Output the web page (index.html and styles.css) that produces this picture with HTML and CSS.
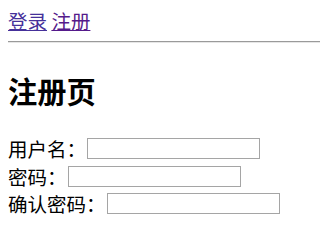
FILE: index.html
```html
<!DOCTYPE html>
<html lang="zh-CN">
<head>
<meta charset="utf-8">
<title>注册页</title>
<link rel="stylesheet" href="styles.css">
</head>
<body>
<nav class="nav"><a class="nav-link nav-link-login" href="#login">登录</a> <a class="nav-link" href="#register">注册</a></nav>
<hr class="rule">
<h2 class="title">注册页</h2>
<form class="form">
  <div class="row"><label class="label" for="u">用户名：</label><input class="field" id="u" type="text"></div>
  <div class="row"><label class="label" for="p">密码：</label><input class="field" id="p" type="password"></div>
  <div class="row"><label class="label" for="c">确认密码：</label><input class="field" id="c" type="password"></div>
</form>
</body>
</html>
```

FILE: styles.css
```css
html, body {
  background: #fff;
}
body {
  margin: 8px 0 0 8px;
  font-family: "Noto Sans CJK SC", "Noto Sans", sans-serif;
  font-size: 19.5px;
  line-height: 25px;
  color: #000;
}
.nav {
  height: 25px;
}
.nav-link {
  color: #551a8b;
  text-decoration: underline;
}
.nav-link-login {
  color: #45309a;
}
.rule {
  margin: 8px 0 0;
  height: 0;
  border: 0;
  border-top: 1px solid #9a9a9a;
  border-bottom: 1px solid #e6e6e6;
}
.title {
  margin: 28px 0 0;
  font-size: 29.25px;
  line-height: 38px;
  font-weight: bold;
}
.form {
  margin: 26px 0 0;
}
.row {
  display: flex;
  align-items: center;
  height: 27.5px;
}
.label {
  white-space: nowrap;
}
.field {
  box-sizing: border-box;
  width: 173px;
  height: 21px;
  margin: 0 0 0 1px;
  padding: 1px 2px;
  border: 1px solid #a5a5a5;
  background: #fff;
  font: inherit;
  font-size: 13px;
}
```
